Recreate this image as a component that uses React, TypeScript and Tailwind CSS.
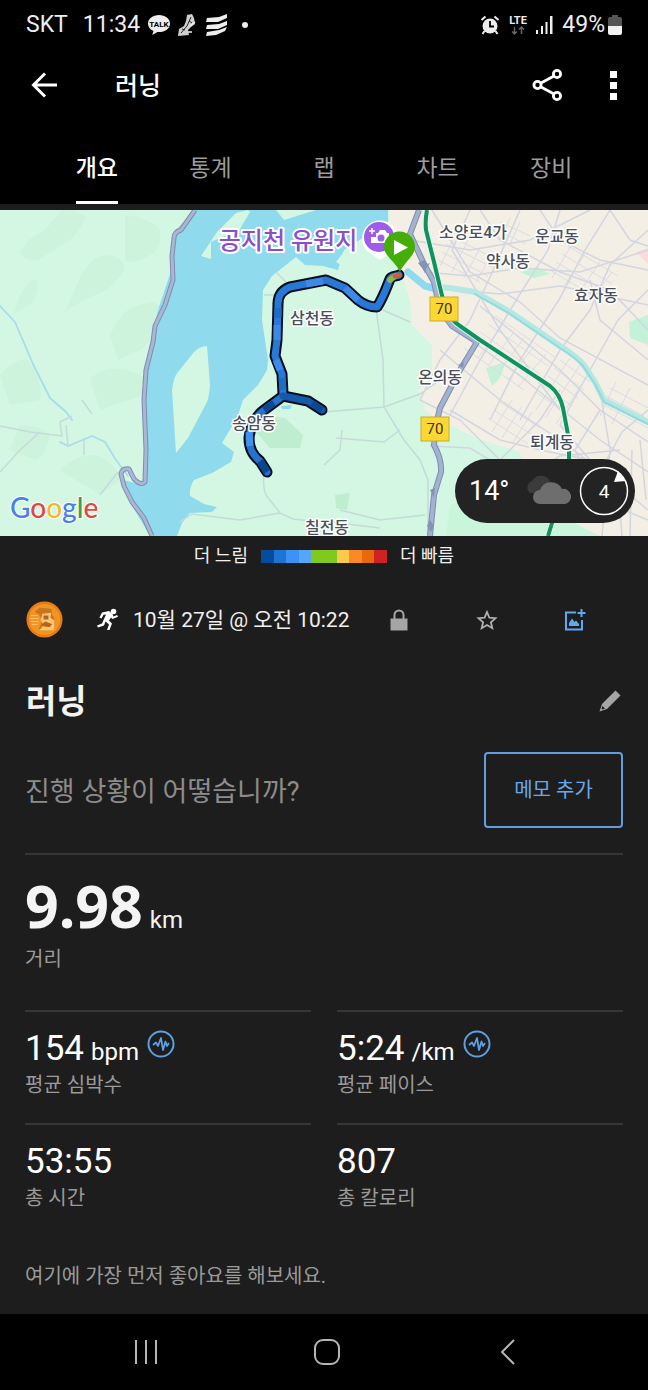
import type { ReactNode } from "react";

const tabs = ["개요", "통계", "랩", "차트", "장비"];

const paceColors = [
  "bg-[#064c9e]",
  "bg-[#1c74d4]",
  "bg-[#3b93f5]",
  "bg-[#54a7fb]",
  "bg-[#80c91f]",
  "bg-[#80c91f]",
  "bg-[#fbc94b]",
  "bg-[#fb8a26]",
  "bg-[#e9680c]",
  "bg-[#cf2222]",
];

// thin local streets, drawn in one stroke style
const streets = [
  "M432 0L470 62L520 92L560 128L648 175",
  "M470 0L452 40L500 120L560 200",
  "M520 0L498 50L470 110L440 150L420 190",
  "M560 0L548 40L520 84L480 150L450 205",
  "M610 0L585 40L560 88L520 150L490 210",
  "M648 20L610 55L590 100L560 140L520 210",
  "M648 80L618 110L590 160L560 215",
  "M410 30L470 40L530 30L590 0",
  "M424 62L470 66L520 58L580 62L648 40",
  "M436 78L500 84L560 76L648 95",
  "M480 0L500 30L560 62L610 80L648 120",
  "M540 0L560 30L600 50L648 60",
  "M590 70L600 110L648 150",
  "M480 96L560 160L600 200L648 232",
  "M455 118L520 166L600 230L648 262",
  "M440 140L500 190L560 230L600 260L648 300",
  "M450 200L500 230L540 240L590 250",
  "M420 190L460 210L500 250L540 262",
  "M560 215L590 250L620 300L622 326",
  "M600 200L575 240L600 290L648 310",
  "M500 250L540 210L560 180",
  "M525 268L560 246L620 240",
  "M600 180L610 240L602 326",
  "M648 200L622 222L590 280",
  "M430 236L470 238L510 262",
  "M632 240L630 326",
  "M640 230L646 290",
  "M610 0L630 30L648 36",
];

const cityBlocks = [
  "M470 130L530 172M464 138L524 180M480 122L540 164M488 114L548 156M496 106L556 148",
  "M478 148L502 116M488 156L514 122M498 163L524 128M508 170L534 136M518 177L546 144",
  "M560 150L590 172M554 158L584 180M548 166L578 188M542 174L572 196M536 182L566 204",
  "M570 148L536 200M580 155L546 207M590 162L556 214",
  "M500 192L540 218M494 200L534 226M488 208L528 234",
  "M512 190L492 222M522 196L502 228M532 202L512 234",
  "M438 50L480 72M442 42L488 66M446 34L494 58M450 26L498 50",
  "M456 24L440 56M468 30L452 62M480 38L464 68M492 44L476 72",
  "M550 60L600 90M556 52L606 82M562 44L612 74M568 36L618 66",
  "M572 34L552 68M586 42L564 76M600 52L578 84M612 62L590 92",
  "M610 178L648 198M606 186L644 206M602 194L648 218M616 172L600 206M630 178L612 214",
  "M500 12L530 26M496 20L526 34M510 8L500 30M520 12L510 34",
];

const westRoad =
  "M195 0L181 20Q174 22 174 28L172 46L173 70L165 95L155 116L153 132L146 160L144 190L146 240L145 272Q141 276 134 269L129 259Q122 258 121 264L124 276L132 292L144 308L152 326";

const eastRoad =
  "M419 0L410 24L424 54L434 72L440 100L452 116L477 132L460 160L440 198L436 215L434 235Q442 250 441 262L434 285L430 326";

const railway = "M427 0Q425 10 426 20L434 52L444 94Q450 110 460 116L480 130L550 176Q560 184 563 198L569 230V270L556 300L548 326";

const trackNorth =
  "M399 65C396 67 392 65 390 69C386 79 383 88 377 97C371 97 363 94 358 90L345 78L326 70L290 77C282 80 278 85 278 94L277 130L275 146L282 164L283 184";

const trackWest = "M283 186L264 200C256 206 250 215 249 228C249 242 256 248 260 251L267 262";

const trackEast = "M283 186L308 191L322 200";

const places = [
  { name: "소양로4가", x: 473, y: 28 },
  { name: "운교동", x: 557, y: 32 },
  { name: "약사동", x: 508, y: 57 },
  { name: "효자동", x: 596, y: 91 },
  { name: "삼천동", x: 312, y: 114 },
  { name: "온의동", x: 440, y: 173 },
  { name: "송암동", x: 254, y: 219 },
  { name: "퇴계동", x: 552, y: 238 },
  { name: "칠전동", x: 327, y: 323 },
];

function StatusBar() {
  return (
    <div className="flex h-[50px] items-center justify-between bg-black px-[26px] text-[23px] text-[#eeeeee]">
      <div className="flex items-center">
        <span>SKT</span>
        <span className="ml-[15px]">11:34</span>
        <svg className="ml-[7px] h-6 w-6" viewBox="0 0 24 24">
          <path
            d="M12 2C5.800 2 1 5.800 1 10.500C1 13.800 3 16.500 6.500 18L5.200 22L10.500 19C17.500 19.500 23 15.800 23 10.500C23 5.800 18.200 2 12 2Z"
            fill="#eee"
          />
          <text x="12" y="13.500" textAnchor="middle" fontSize="8" fontWeight="700" fill="#000">
            TALK
          </text>
        </svg>
        <svg className="ml-[6px] h-6 w-5" viewBox="0 0 20 24">
          <path d="M10 2L15 1L17 5L18 11L14 14L11 17L12 22L1 23L2 16L7 13L9 8Z" fill="#cfcfcf" />
          <path d="M14 4L10 13L4 20M5 16L8 17M12 8L15 10" stroke="#222" strokeWidth="1" fill="none" />
          <path d="M13 13L18 9M11 19H15" stroke="#eee" strokeWidth="1.500" />
        </svg>
        <svg className="ml-2 h-6 w-6" viewBox="0 0 24 24" fill="#eee">
          <path d="M2 5L14 4L22 1V5L13 9H1ZM2 12L14 11L22 8V12L13 16H1ZM2 19L14 17L22 14L20 18L11 22L1 23Z" />
        </svg>
        <span className="ml-[13px] h-[6px] w-[6px] rounded-full bg-[#eeeeee]" />
      </div>
      <div className="flex items-center">
        <svg className="h-5 w-5" viewBox="0 0 20 20">
          <circle cx="10" cy="11" r="7.500" fill="#eee" />
          <path d="M1.500 5L5.500 1.500M18.500 5L14.500 1.500M4.500 16L2.500 19M15.500 16L17.500 19" stroke="#eee" strokeWidth="2" />
          <path d="M10 6V11.500H14" stroke="#000" strokeWidth="1.800" fill="none" />
        </svg>
        <svg className="ml-2 h-6 w-5" viewBox="0 0 20 24">
          <text x="10" y="11" textAnchor="middle" fontSize="11" fontWeight="700" fill="#eee">
            LTE
          </text>
          <path d="M6.500 14V21M4 18.500L6.500 21L9 18.500M13.500 21V14M11 16.500L13.500 14L16 16.500" stroke="#666" strokeWidth="1.500" fill="none" />
        </svg>
        <svg className="ml-[7px] h-[18px] w-[18px]" viewBox="0 0 18 18" fill="#eee">
          <path d="M1 14H3V18H1ZM6 10H8V18H6ZM10.500 6H12.500V18H10.500ZM15 0H17.500V18H15Z" />
        </svg>
        <span className="ml-[9px]">49%</span>
        <svg className="ml-[3px] h-5 w-[14px]" viewBox="0 0 14 20">
          <path d="M4 0H10V2H12Q14 2 14 4V11H0V4Q0 2 2 2H4Z" fill="#555" />
          <path d="M0 11H14V18Q14 20 12 20H2Q0 20 0 18Z" fill="#f2f2f2" />
        </svg>
      </div>
    </div>
  );
}

function AppBar() {
  return (
    <header className="flex h-[70px] items-center bg-black pr-[27px] pl-[26px]">
      <button type="button" aria-label="뒤로">
        <svg className="h-9 w-9" viewBox="0 0 36 36" fill="none" stroke="#fff" strokeWidth="3">
          <path d="M31 18H8M19 6.500L7.500 18L19 29.500" />
        </svg>
      </button>
      <h1 className="ml-[53px] pt-[3px] text-[25px] font-medium text-white">러닝</h1>
      <button type="button" aria-label="공유" className="ml-auto">
        <svg className="h-9 w-9" viewBox="0 0 36 36" fill="none" stroke="#fff" strokeWidth="2.800">
          <path d="M11 16L24 9M11 20L24 27" />
          <circle cx="7.500" cy="18" r="3.600" />
          <circle cx="27" cy="7" r="3.600" />
          <circle cx="27" cy="29" r="3.600" />
        </svg>
      </button>
      <button type="button" aria-label="더보기" className="ml-[41px]">
        <svg className="h-8 w-[14px]" viewBox="0 0 14 32" fill="#fff">
          <path d="M3 2H10V9H3ZM3 13H10V20H3ZM3 24H10V31H3Z" />
        </svg>
      </button>
    </header>
  );
}

function Tabs() {
  return (
    <nav role="tablist" className="grid grid-cols-5 bg-black px-10">
      {tabs.map((tab, i) => (
        <div key={tab} className="flex justify-center">
          <button
            type="button"
            role="tab"
            aria-selected={i === 0}
            className={
              i === 0
                ? "h-[84px] border-b-3 border-white pt-[18px] text-[23px] font-medium text-white"
                : "h-[84px] border-b-3 border-transparent pt-[18px] text-[23px] text-[#9c9c9c]"
            }
          >
            {tab}
          </button>
        </div>
      ))}
    </nav>
  );
}

function RoadSign({ x, y }: { x: number; y: number }) {
  return (
    <g>
      <rect x={x - 14} y={y - 12} width="28" height="24" fill="#fdd835" stroke="#c9ab2a" />
      <text x={x} y={y + 5} textAnchor="middle" fontSize="15" fill="#3a3320">
        70
      </text>
    </g>
  );
}

function RouteMap() {
  return (
    <svg className="block h-[326px] w-full" viewBox="0 0 648 326" preserveAspectRatio="xMidYMid slice">
      <rect width="648" height="326" fill="#d3f7e2" />

      {/* hills */}
      <g fill="#c8f0d8" opacity="0.45">
        <path d="M62 0Q80 0 85 8Q78 24 70 30L38 50Q24 52 20 42Q30 26 45 20ZM80 68Q92 44 108 45Q126 48 124 60Q112 80 95 85L66 100ZM20 85Q32 66 38 70Q38 88 30 95L14 104Z" />
        <path d="M110 125Q124 96 140 95Q160 88 160 100Q156 130 140 140L118 150ZM90 168Q106 156 125 160Q148 166 150 175Q144 188 128 190L100 200ZM0 165Q18 146 28 150Q44 172 40 190L10 195ZM125 5Q150 8 160 20Q162 40 150 45Q132 56 125 50Z" />
        <path d="M60 260Q76 244 95 245Q116 252 120 270L100 285ZM20 215Q40 214 50 225Q46 246 35 250L10 240Z" />
      </g>
      <path d="M262 205L285 208L303 225L300 238L270 238L256 222ZM335 285L350 283L347 300L336 298Z" fill="#bfedcf" />

      {/* city */}
      <path
        d="M390 0H648V326H445L452 296L470 285L524 262L520 242L480 230L448 216L425 200L419 180L432 160L432 135L412 115L410 90L400 60L388 20Z"
        fill="#f3efe5"
      />
      <path d="M448 214L480 230L520 242V266L470 286L452 296L446 326H430L434 236Z" fill="#d3f7e2" />
      <path d="M450 296L470 284L500 276L600 326H446Z" fill="#c9f5da" />
      <path d="M629 112L648 105V135L630 128ZM520 62L536 57L550 64L534 68ZM486 158L506 152L500 168L492 176Z" fill="#c3f2d8" />
      <path d="M636 42L648 38V54Z" fill="#fbdcda" />
      <g fill="none" stroke="#dadce4" strokeWidth="1">
        {cityBlocks.map((d) => (
          <path key={d} d={d} />
        ))}
      </g>
      <g fill="none" stroke="#d3d6e0" strokeWidth="1.500">
        {streets.map((d) => (
          <path key={d} d={d} />
        ))}
      </g>

      {/* lake */}
      <path
        d="M194 0H388V12L372 22L344 40L338 60L323 56L305 55L296 47L272 66L263 80L262 110L268 150L267 160L258 175L243 190L237 208L222 233L234 242L231 252L212 263L194 270Q189 278 190 286L204 294L217 297L212 302L190 303L182 313L177 326H150L130 292L123 270L143 275L146 240L144 160L158 100L173 55L172 25Z"
        fill="#90daee"
      />
      <path d="M248 0L236 3L217 22L201 46L211 49L211 32L240 19L250 2ZM390 20L350 34L336 52L352 62L392 62Z" fill="#d3f7e2" />
      <path d="M276 0L284 10L316 0Z" fill="#d3f7e2" />
      <path d="M194 142Q200 136 207 136L210 175Q209 188 207 192L188 228L176 243L172 180Q174 166 178 162Z" fill="#d3f7e2" />
      <path d="M281 196L292 195L290 199L282 199Z" fill="#90daee" />
      <path d="M338 0H388V8L352 26L338 36Z" fill="#90daee" />

      {/* streams */}
      <g fill="none" stroke="#a9dcea" strokeLinecap="round" strokeLinejoin="round">
        <path d="M0 96L15 112L33 154L50 188L66 202L72 210M60 232L68 236L92 226L105 232L116 250L128 266" strokeWidth="1.800" />
        <path d="M408 62L425 76L450 78L475 82L510 102L560 136Q576 146 583 154L595 172L604 190L648 212" stroke="#b5e8e2" strokeWidth="6" />
        <path d="M475 84L510 104L560 138Q576 148 583 156L595 174L604 192L648 214" stroke="#92dadf" strokeWidth="2" />
        <path d="M408 62L425 76L440 80" stroke="#90daee" strokeWidth="7" />
      </g>

      {/* paths outside the city */}
      <g fill="none" stroke="#c6dadb" strokeWidth="1.500">
        <path d="M0 216L30 222L62 226L60 212L72 206M0 262L20 240L40 222M82 190L92 204M100 285L118 262M66 215L68 236M84 230V245" />
        <path d="M264 265Q262 284 270 290L280 303L293 309L320 312M180 312L192 304L240 310L280 303" />
        <path d="M376 98L383 150L384 197L404 230L420 250L428 270V326M324 202L384 197L420 184L440 170M336 228L384 232L400 220M342 220L340 240L324 255M376 97L410 112M340 300L380 310L425 305M330 312L380 318" />
        <path d="M264 85H285M276 62L292 78" />
      </g>

      {/* main roads */}
      <g fill="none" strokeLinejoin="round">
        <path d={westRoad} stroke="#7e8cb0" strokeWidth="5" />
        <path d={westRoad} stroke="#a9b7d2" strokeWidth="3" />
        <path d={eastRoad} stroke="#7e8cb0" strokeWidth="6" />
        <path d={eastRoad} stroke="#a3b2cf" strokeWidth="4" />
        <path d={railway} stroke="#e8f5ef" strokeWidth="6" />
        <path d={railway} stroke="#10925f" strokeWidth="4" />
      </g>
      <path d="M418 53L424 50L427 54L430 53L426 59L425 63L422 58ZM458 155L464 152L463 158ZM430 280L435 278L434 288ZM427 316L430 310L434 316L431 322Z" fill="#8393b8" />

      {/* recorded track */}
      <g fill="none" strokeLinejoin="round" strokeLinecap="round">
        <g stroke="#070d1c" strokeWidth="11">
          <path d={trackNorth} />
          <path d={trackWest} />
          <path d={trackEast} />
        </g>
        <path d={trackNorth} stroke="#2878d8" strokeWidth="7" />
        <path d={trackWest} stroke="#2673ce" strokeWidth="7" />
        <path d={trackEast} stroke="#1459aa" strokeWidth="7" />
        <g strokeLinecap="butt" strokeWidth="7">
          <path d="M345 78L358 90M323 71L306 74M277 115L277 130M276 150L280 160" stroke="#3c8ae6" />
          <path d="M278 98L278 108M282 168L283 180" stroke="#1e6cc6" />
          <path d="M260 251L267 262M312 193L322 200M274 193L264 200" stroke="#0b4791" />
          <path d="M249 222L250 236" stroke="#4192ee" />
        </g>
        <path d="M390 70L395 66" stroke="#8fb84a" strokeWidth="6" />
        <path d="M395 66L399 65" stroke="#c9602f" strokeWidth="5" />
      </g>

      {/* place names */}
      <g fill="#4a4f5a" stroke="#ffffff" strokeWidth="3" strokeLinejoin="round" paintOrder="stroke" textAnchor="middle" fontSize="16" fontWeight="500">
        {places.map((p) => (
          <text key={p.name} x={p.x} y={p.y}>
            {p.name}
          </text>
        ))}
      </g>
      <text x="288" y="39" textAnchor="middle" fontSize="24" fontWeight="500" fill="#8a4fc7" stroke="#fff" strokeWidth="4" strokeLinejoin="round" paintOrder="stroke">
        공지천 유원지
      </text>

      <RoadSign x={444} y={99} />
      <RoadSign x={435} y={219} />

      {/* photo spot pin */}
      <path d="M380 50L368 42A18 18 0 1 1 392 42Z" fill="#fff" />
      <circle cx="379" cy="27" r="15" fill="#9d5ce9" />
      <path d="M376 23H378L380 20H385L387 23H389V33H371V27H376Z" fill="#fff" />
      <circle cx="381" cy="28" r="3.500" fill="#9d5ce9" />
      <path d="M372 18V24M369 21H375" stroke="#fff" strokeWidth="1.500" />

      {/* start marker */}
      <path d="M400 62C396 52 384 46 384 37A15.500 15.500 0 0 1 415 37C415 46 404 52 400 62Z" fill="#45ad08" />
      <path d="M394 30V45L408 37.500Z" fill="#fff" />

      <text x="10" y="308" fontFamily="Lato" fontSize="28" fontWeight="500" stroke="#fff" strokeWidth="2" paintOrder="stroke">
        <tspan fill="#4a80e8">G</tspan>
        <tspan fill="#e0483c">o</tspan>
        <tspan fill="#f3bb1c">o</tspan>
        <tspan fill="#4a80e8">g</tspan>
        <tspan fill="#35a056">l</tspan>
        <tspan fill="#e0483c">e</tspan>
      </text>
    </svg>
  );
}

function WeatherPill() {
  return (
    <div className="absolute right-[13px] bottom-[13px] flex h-16 w-[180px] items-center rounded-full bg-[#232323] pr-[6px] pl-[14px] text-white">
      <span className="text-[27px]">14°</span>
      <svg className="ml-auto h-8 w-[50px]" viewBox="0 0 50 32">
        <path d="M7 18A7 7 0 0 1 9 6A10 10 0 0 1 27 7L24 18Z" fill="#3b3b3b" />
        <path d="M17 29A7 7 0 0 1 17 15A12 12 0 0 1 39 14A7.500 7.500 0 0 1 42 29Z" fill="#6e6e6e" />
      </svg>
      <svg className="ml-[6px] h-[50px] w-[50px]" viewBox="0 0 50 50">
        <circle cx="25" cy="25" r="23.500" fill="none" stroke="#fff" strokeWidth="1.500" />
        <path d="M39 5L35 16L47 15Z" fill="#fff" />
        <text x="25" y="32" textAnchor="middle" fontSize="19" fill="#fff">
          4
        </text>
      </svg>
    </div>
  );
}

function PaceLegend() {
  return (
    <div className="flex h-10 items-center justify-center gap-[13px] text-lg text-[#f0f0f0]">
      <span>더 느림</span>
      <div className="flex h-[13px] w-[126px]">
        {paceColors.map((color, i) => (
          <span key={i} className={`flex-1 ${color}`} />
        ))}
      </div>
      <span>더 빠름</span>
    </div>
  );
}

function RunnerIcon() {
  return (
    <svg className="ml-[34px] h-6 w-[22px]" viewBox="0 0 22 24" fill="#fff">
      <circle cx="16.500" cy="3.500" r="2.800" />
      <path d="M5 4.500L12 3L15.500 6L16.500 8.500L20 7L21 8.800L15.500 11L14 9.500L12 12.500L15 15.500L12.500 22H10L12 16.500L8.500 13.500L7 17.500L1 19.500L0 17.500L5 15.500L9 6.500L6.500 6.800L4.500 10.500L2.500 9.500Z" />
    </svg>
  );
}

function ActivityMeta() {
  return (
    <div className="flex h-[87px] items-center px-[26px]">
      <svg className="h-[37px] w-[37px]" viewBox="0 0 38 38">
        <circle cx="19" cy="19" r="18.500" fill="#e67c17" />
        <circle cx="19" cy="19" r="16" fill="#f29422" />
        <path d="M9 11L14 7L26 8L27 14L29 18V29H13L16 22L14 14Z" fill="#c9751f" />
        <path d="M17 13L26 12L25 17L29 20V30H14L18 25L15 19Z" fill="#fbc676" />
        <path d="M18 15H23V19H18ZM16 24L20 21L27 24L24 27L18 26Z" fill="#b5641a" />
        <path d="M5 15H12M4 18H13M5 21H13M6 24H12" stroke="#fbc676" strokeWidth="1" />
      </svg>
      <RunnerIcon />
      <time className="ml-[14px] pt-[3px] text-[21px] text-[#f0f0f0]">10월 27일 @ 오전 10:22</time>
      <div className="ml-auto flex items-center gap-[66px] pr-[36px]">
        <button type="button" aria-label="비공개">
          <svg className="h-[22px] w-[22px]" viewBox="0 0 22 22">
            <path d="M6.500 10V6A4.500 4.500 0 0 1 15.500 6V10" fill="none" stroke="#a5a5a5" strokeWidth="2" />
            <path d="M2.500 9.500H19.500V21.500H2.500Z" fill="#a5a5a5" />
          </svg>
        </button>
        <button type="button" aria-label="즐겨찾기">
          <svg className="h-[22px] w-[22px]" viewBox="0 0 22 22" fill="none" stroke="#b0b0b0" strokeWidth="1.800">
            <path d="M11 3L13.400 8.600L19.500 9.200L14.900 13.200L16.300 19.200L11 16L5.700 19.200L7.100 13.200L2.500 9.200L8.600 8.600Z" />
          </svg>
        </button>
        <button type="button" aria-label="사진 추가">
          <svg className="h-[22px] w-[22px]" viewBox="0 0 22 22">
            <path d="M12 3.500H2V20.500H18V11" fill="none" stroke="#61a8f2" strokeWidth="2" />
            <path d="M17.500 0V8M13.500 4H21.500" stroke="#61a8f2" strokeWidth="2" />
            <path d="M5 17V14L8 9.500L10.500 13L12 11.500L15 15V17Z" fill="#61a8f2" />
          </svg>
        </button>
      </div>
    </div>
  );
}

function PulseIcon() {
  return (
    <svg className="h-7 w-7" viewBox="0 0 28 28" fill="none" stroke="#5f9fe0">
      <circle cx="14" cy="14" r="12.500" strokeWidth="2" />
      <path d="M6 15L9 12.500L11 16L14 8L16 20L18.500 11.500L20 16L22 13" strokeWidth="1.800" strokeLinejoin="round" />
    </svg>
  );
}

type StatProps = {
  value: string;
  unit?: string;
  label: string;
  icon?: ReactNode;
};

function Stat({ value, unit, label, icon }: StatProps) {
  return (
    <div className="h-[113px] border-t-2 border-[#363636] pt-4">
      <div className="flex h-[42px] items-start text-white">
        <div className="leading-[42px]">
          <span className="text-[35px]">{value}</span>
          {unit && <span className="ml-[7px] text-2xl">{unit}</span>}
        </div>
        {icon && <span className="ml-2 pt-[2px]">{icon}</span>}
      </div>
      <div className="text-xl leading-[30px] text-[#9a9a9a]">{label}</div>
    </div>
  );
}

function NavBar() {
  return (
    <nav className="flex h-[76px] items-center justify-around bg-black pr-[49px] pl-[55px]">
      <button type="button" aria-label="최근 앱">
        <svg className="h-8 w-8" viewBox="0 0 32 32" stroke="#b5b5b5" strokeWidth="2">
          <path d="M6 4V28M16 4V28M26 4V28" />
        </svg>
      </button>
      <button type="button" aria-label="홈">
        <svg className="h-8 w-8" viewBox="0 0 32 32" fill="none" stroke="#b5b5b5" strokeWidth="2">
          <rect x="4" y="4" width="24" height="24" rx="8" />
        </svg>
      </button>
      <button type="button" aria-label="뒤로 가기">
        <svg className="h-8 w-8" viewBox="0 0 32 32" fill="none" stroke="#b5b5b5" strokeWidth="2">
          <path d="M22 4L10 16L22 28" />
        </svg>
      </button>
    </nav>
  );
}

export default function App() {
  return (
    <div className="min-h-screen bg-[#1d1d1d] font-['Roboto','Noto_Sans_CJK_KR',sans-serif]">
      <StatusBar />
      <AppBar />
      <Tabs />

      <div className="relative mt-[6px]">
        <RouteMap />
        <WeatherPill />
      </div>
      <PaceLegend />

      <main>
        <ActivityMeta />

        <div className="flex h-[76px] items-center justify-between px-[26px]">
          <h2 className="pt-[2px] text-[33px] font-bold text-[#f2f2f2]">러닝</h2>
          <button type="button" aria-label="이름 편집">
            <svg className="h-6 w-6" viewBox="0 0 24 24">
              <path d="M17.500 1.500L22.500 6.500L9 20L1.500 22.500L4 15Z" fill="#a5a5a5" />
              <path d="M4.500 17L7 19.500L4.500 20.500L3.600 19.500Z" fill="#1d1d1d" />
            </svg>
          </button>
        </div>

        <section className="px-[25px]">
          <div className="flex items-center justify-between pt-[13px] pb-[25px]">
            <p className="pt-1 text-[27px] text-[#8c8c8c]">진행 상황이 어떻습니까?</p>
            <button type="button" className="h-[76px] w-[139px] rounded border-2 border-[#5f9fe0] text-xl text-[#68a8ee]">
              메모 추가
            </button>
          </div>

          <div className="h-[157px] border-t-2 border-[#363636] pt-[17px]">
            <div className="flex h-[72px] items-baseline text-[#f4f4f4]">
              <span className="font-['Noto_Sans'] text-[59px] leading-[66px] font-bold">9.98</span>
              <span className="ml-[7px] text-2xl">km</span>
            </div>
            <div className="text-xl leading-[30px] text-[#9a9a9a]">거리</div>
          </div>

          <div className="grid grid-cols-2 gap-x-[26px]">
            <Stat value="154" unit="bpm" label="평균 심박수" icon={<PulseIcon />} />
            <Stat value="5:24" unit="/km" label="평균 페이스" icon={<PulseIcon />} />
            <Stat value="53:55" label="총 시간" />
            <Stat value="807" label="총 칼로리" />
          </div>

          <p className="pt-[25px] pb-[23px] text-xl leading-[30px] text-[#9a9a9a]">여기에 가장 먼저 좋아요를 해보세요.</p>
        </section>
      </main>

      <NavBar />
    </div>
  );
}
